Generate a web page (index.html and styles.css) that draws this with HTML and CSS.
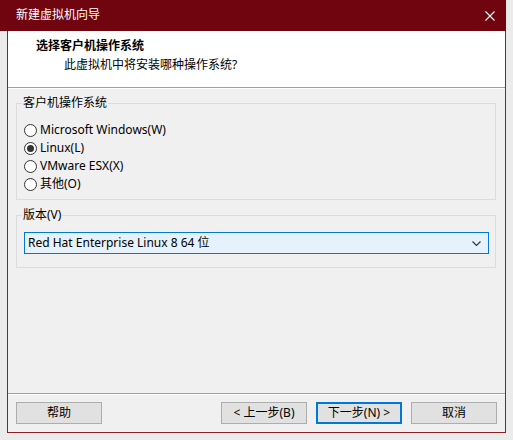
FILE: index.html
```html
<!DOCTYPE html>
<html lang="zh-CN">
<head>
<meta charset="utf-8">
<title>新建虚拟机向导</title>
<link rel="stylesheet" href="styles.css">
</head>
<body>
<div class="window">
  <div class="titlebar">
    <span class="title">新建虚拟机向导</span>
    <span class="close">
      <svg width="10" height="10" viewBox="0 0 10 10"><path d="M0.5 0.5 L9.5 9.5 M9.5 0.5 L0.5 9.5" stroke="#fff" stroke-width="1.1" fill="none"/></svg>
    </span>
  </div>
  <div class="body">
    <div class="header">
      <div class="h-title">选择客户机操作系统</div>
      <div class="h-sub">此虚拟机中将安装哪种操作系统?</div>
    </div>
    <div class="content">
      <fieldset class="group g1">
        <legend>客户机操作系统</legend>
        <div class="radios">
          <div class="radio"><span class="dot"></span><span>Microsoft Windows(W)</span></div>
          <div class="radio on"><span class="dot"></span><span>Linux(L)</span></div>
          <div class="radio"><span class="dot"></span><span>VMware ESX(X)</span></div>
          <div class="radio"><span class="dot"></span><span>其他(O)</span></div>
        </div>
      </fieldset>
      <fieldset class="group g2">
        <legend>版本(V)</legend>
        <div class="select">
          <span>Red Hat Enterprise Linux 8 64 位</span>
          <svg width="9" height="5" viewBox="0 0 9 5"><path d="M0.5 0.5 L4.5 4.5 L8.5 0.5" stroke="#333" stroke-width="1.1" fill="none"/></svg>
        </div>
      </fieldset>
    </div>
    <div class="footer">
      <button class="btn">帮助</button>
      <div class="spacer"></div>
      <button class="btn">&lt; 上一步(B)</button>
      <button class="btn primary">下一步(N) &gt;</button>
      <button class="btn">取消</button>
    </div>
  </div>
</div>
</body>
</html>
```
FILE: styles.css
```css
* { box-sizing: border-box; }
html, body { margin: 0; padding: 0; }
body {
  width: 513px;
  height: 440px;
  background: #ebebeb;
  font-family: "Noto Sans", "Noto Sans CJK SC", sans-serif;
  font-size: 12px;
  line-height: 16px;
  color: #000;
  overflow: hidden;
}
.window {
  width: 506px;
  display: flex;
  flex-direction: column;
}
.titlebar {
  height: 31px;
  background: #71050f;
  color: #fff;
  display: flex;
  align-items: center;
  padding-left: 16px;
}
.title { flex: 1; padding-bottom: 1px; }
.close {
  width: 46px;
  height: 31px;
  display: flex;
  align-items: center;
  justify-content: center;
  margin-right: -7px;
}
.body {
  margin-left: 7px;
  height: 402px;
  border: 1px solid #8d1d26;
  border-top: none;
  display: flex;
  flex-direction: column;
}
.header {
  height: 57px;
  background: #fff;
  border-bottom: 1px solid #a0a0a0;
  padding-top: 7px;
  padding-left: 28px;
}
.h-title { font-weight: bold; }
.h-sub { margin-top: 3px; padding-left: 28px; }
.content {
  flex: 1;
  background: #f0f0f0;
  border-top: 1px solid #fff;
  border-bottom: 1px solid #a0a0a0;
  padding: 0 9px 0 8px;
}
.group {
  margin: 0;
  padding: 0;
  border: 1px solid #dcdcdc;
  min-width: 0;
}
.group legend {
  margin-left: 5px;
  padding: 0 1px;
  line-height: 16px;
}
.g1 { margin-top: 6px; padding-bottom: 6px; }
.g2 { margin-top: 7px; padding-bottom: 13px; }
.radios { padding-top: 10px; padding-left: 7px; }
.radio {
  height: 18px;
  display: flex;
  align-items: center;
  gap: 3px;
}
.dot {
  width: 13px;
  height: 13px;
  border: 1px solid #333;
  border-radius: 50%;
  background: #fff;
  display: flex;
  align-items: center;
  justify-content: center;
}
.radio.on .dot::after {
  content: "";
  width: 7px;
  height: 7px;
  border-radius: 50%;
  background: #333;
}
.select {
  margin: 9px 6px 0 7px;
  height: 22px;
  border: 1px solid #0078d7;
  background: #e5f1fb;
  display: flex;
  align-items: center;
  justify-content: space-between;
  padding: 0 7px 0 3px;
}
.footer {
  height: 38px;
  background: #f0f0f0;
  border-top: 1px solid #fff;
  display: flex;
  align-items: flex-start;
  padding: 7px 8px 0 8px;
  gap: 9px;
}
.spacer { flex: 1; }
.btn {
  width: 86px;
  height: 22px;
  border: 1px solid #adadad;
  background: #e1e1e1;
  font: inherit;
  color: #000;
  padding: 0;
  margin: 0;
}
.btn.primary { border: 2px solid #0078d7; }
```
